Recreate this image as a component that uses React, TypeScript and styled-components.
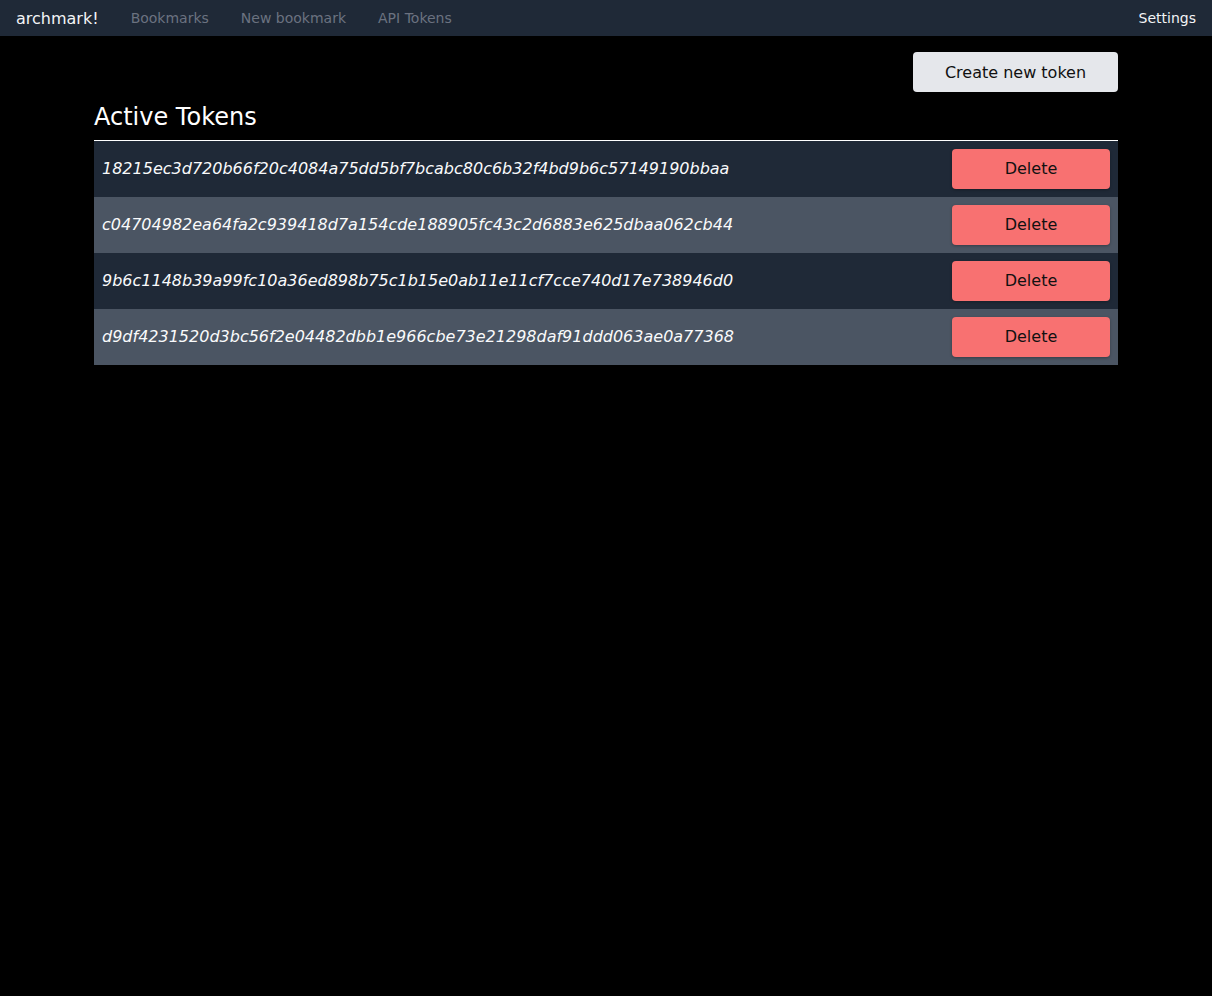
import React from 'react';
import styled, { createGlobalStyle } from 'styled-components';

const GlobalStyle = createGlobalStyle`
  body {
    margin: 0;
    background: #000;
    font-family: 'DejaVu Sans', Verdana, sans-serif;
    color: #fff;
  }
`;

const Nav = styled.nav`
  display: flex;
  align-items: center;
  height: 36px;
  padding: 0 16px;
  background: #1f2937;
`;

const Brand = styled.a`
  font-size: 16px;
  color: #f3f4f6;
  margin-right: 16px;
`;

const NavLink = styled.a<{ active?: boolean }>`
  font-size: 14px;
  color: ${p => (p.active ? '#f3f4f6' : '#6b7280')};
  margin-left: 16px;
  margin-right: 16px;
  &:last-child {
    margin-right: 0;
  }
`;

const Spacer = styled.div`
  flex: 1;
`;

const Main = styled.main`
  width: 1024px;
  margin: 0 auto;
  padding-top: 16px;
`;

const Toolbar = styled.div`
  display: flex;
  justify-content: flex-end;
`;

const Button = styled.button<{ danger?: boolean }>`
  height: 40px;
  border: none;
  border-radius: 4px;
  font-family: inherit;
  font-size: 16px;
  color: #111;
  background: ${p => (p.danger ? '#f87171' : '#e5e7eb')};
  box-shadow: ${p => (p.danger ? '0 1px 3px rgba(0,0,0,0.3)' : 'none')};
  cursor: pointer;
`;

const CreateButton = styled(Button)`
  width: 205px;
`;

const Heading = styled.h2`
  margin: 9px 0 0;
  padding-bottom: 7px;
  font-size: 24px;
  line-height: 32px;
  font-weight: normal;
  border-bottom: 1px solid #fff;
`;

const Row = styled.div<{ alt?: boolean }>`
  display: flex;
  align-items: center;
  justify-content: space-between;
  height: 56px;
  padding: 0 8px;
  background: ${p => (p.alt ? '#4b5563' : '#1f2937')};
`;

const Token = styled.span`
  font-style: italic;
  font-size: 16px;
  line-height: 24px;
  padding-bottom: 1px;
  color: #f9fafb;
`;

const DeleteButton = styled(Button)`
  width: 158px;
  padding-bottom: 3px;
`;

const tokens = [
  '18215ec3d720b66f20c4084a75dd5bf7bcabc80c6b32f4bd9b6c57149190bbaa',
  'c04704982ea64fa2c939418d7a154cde188905fc43c2d6883e625dbaa062cb44',
  '9b6c1148b39a99fc10a36ed898b75c1b15e0ab11e11cf7cce740d17e738946d0',
  'd9df4231520d3bc56f2e04482dbb1e966cbe73e21298daf91ddd063ae0a77368',
];

export default function App() {
  return (
    <>
      <GlobalStyle />
      <Nav>
        <Brand>archmark!</Brand>
        <NavLink>Bookmarks</NavLink>
        <NavLink>New bookmark</NavLink>
        <NavLink>API Tokens</NavLink>
        <Spacer />
        <NavLink active>Settings</NavLink>
      </Nav>
      <Main>
        <Toolbar>
          <CreateButton>Create new token</CreateButton>
        </Toolbar>
        <Heading>Active Tokens</Heading>
        {tokens.map((t, i) => (
          <Row key={t} alt={i % 2 === 1}>
            <Token>{t}</Token>
            <DeleteButton danger>Delete</DeleteButton>
          </Row>
        ))}
      </Main>
    </>
  );
}
